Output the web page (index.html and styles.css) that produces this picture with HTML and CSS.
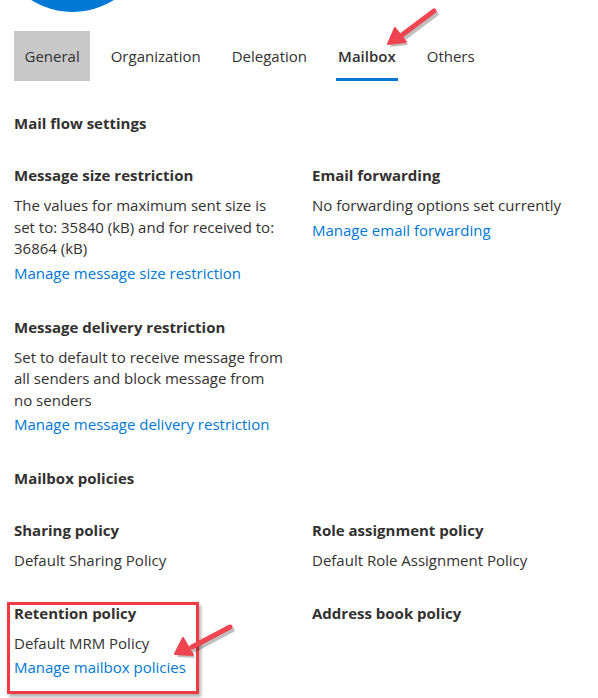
FILE: index.html
```html
<!DOCTYPE html>
<html lang="en">
<head>
<meta charset="utf-8">
<title>Mailbox</title>
<link rel="stylesheet" href="styles.css">
</head>
<body>
<div class="page">
  <div class="avatar"></div>
  <nav class="tabs">
    <span class="tab tab-hover">General</span>
    <span class="tab">Organization</span>
    <span class="tab">Delegation</span>
    <span class="tab tab-active">Mailbox</span>
    <span class="tab">Others</span>
  </nav>

  <main class="content">
    <h2 class="section-title">Mail flow settings</h2>
    <div class="grid">
      <div class="item">
        <h3 class="item-title">Message size restriction</h3>
        <p class="item-text">The values for maximum sent size is set to: 35840 (kB) and for received to: 36864 (kB)</p>
        <a class="item-link" href="#">Manage message size restriction</a>
      </div>
      <div class="item">
        <h3 class="item-title">Email forwarding</h3>
        <p class="item-text">No forwarding options set currently</p>
        <a class="item-link" href="#">Manage email forwarding</a>
      </div>
      <div class="item">
        <h3 class="item-title">Message delivery restriction</h3>
        <p class="item-text">Set to default to receive message from all senders and block message from no senders</p>
        <a class="item-link" href="#">Manage message delivery restriction</a>
      </div>
    </div>

    <h2 class="section-title section-title-next">Mailbox policies</h2>
    <div class="grid grid-policies">
      <div class="item">
        <h3 class="item-title">Sharing policy</h3>
        <p class="item-text">Default Sharing Policy</p>
      </div>
      <div class="item">
        <h3 class="item-title">Role assignment policy</h3>
        <p class="item-text">Default Role Assignment Policy</p>
      </div>
      <div class="item item-marked">
        <h3 class="item-title">Retention policy</h3>
        <p class="item-text">Default MRM Policy</p>
        <a class="item-link" href="#">Manage mailbox policies</a>
      </div>
      <div class="item">
        <h3 class="item-title">Address book policy</h3>
      </div>
    </div>
  </main>

  <svg class="arrow arrow-tab" width="70" height="60" viewBox="0 0 70 60">
    <g class="arrow-shadow" transform="translate(2,3)">
      <line x1="54" y1="12" x2="22" y2="36" />
      <polygon points="8,45 15,29 26,43" />
    </g>
    <g class="arrow-red">
      <line x1="54" y1="12" x2="22" y2="36" />
      <polygon points="8,45 15,29 26,43" />
    </g>
  </svg>

  <svg class="arrow arrow-policy" width="80" height="50" viewBox="0 0 80 50">
    <g class="arrow-shadow" transform="translate(2,3)">
      <line x1="68" y1="9" x2="30" y2="29" />
      <polygon points="13,36 21,20 31,37" />
    </g>
    <g class="arrow-red">
      <line x1="68" y1="9" x2="30" y2="29" />
      <polygon points="13,36 21,20 31,37" />
    </g>
  </svg>
</div>
</body>
</html>
```

FILE: styles.css
```css
* { box-sizing: border-box; }

html, body {
  margin: 0;
  padding: 0;
  background: #ffffff;
}

body {
  font-family: "Segoe UI", "Open Sans", "Noto Sans", sans-serif;
  font-size: 15px;
  color: #323130;
  width: 598px;
  height: 698px;
  overflow: hidden;
}

.page {
  position: relative;
  width: 598px;
  height: 698px;
}

.avatar {
  position: absolute;
  left: -5px;
  top: -143px;
  width: 155px;
  height: 155px;
  border-radius: 50%;
  background: #0078d4;
}

.tabs {
  display: flex;
  gap: 10px;
  padding: 31px 0 0 14px;
  height: 81px;
}

.tab {
  position: relative;
  display: flex;
  align-items: center;
  height: 50px;
  padding: 0 10.5px;
  color: #323130;
  font-size: 15px;
  white-space: nowrap;
}

.tab-hover {
  background: #c8c8c8;
}

.tab-active {
  font-weight: 600;
}

.tab-active::after {
  content: "";
  position: absolute;
  left: 8px;
  right: 8px;
  bottom: 0;
  height: 3px;
  background: #0078d4;
}

.content {
  display: flex;
  flex-direction: column;
  gap: 32px;
  padding: 32px 14px 0 14px;
}

.section-title,
.item-title {
  margin: 0;
  font-size: 15px;
  font-weight: 700;
  line-height: 20px;
  color: #323130;
}

.section-title-next {
  margin-top: 1px;
}

.grid {
  display: grid;
  grid-template-columns: 270px 1fr;
  column-gap: 28px;
  row-gap: 33px;
}

.grid-policies {
  row-gap: 31px;
}

.item {
  display: flex;
  flex-direction: column;
}

.item-title {
  margin-bottom: 10px;
}

.item-text {
  margin: 0;
  line-height: 21.5px;
  color: #323130;
}

.item-link {
  margin-top: 3px;
  line-height: 21px;
  color: #0078d4;
  text-decoration: none;
  align-self: flex-start;
}

.item-marked {
  position: relative;
}

.item-marked::before {
  content: "";
  position: absolute;
  left: -7px;
  top: -1px;
  width: 186px;
  height: 86px;
  border: 3px solid #f03a44;
  box-shadow: 2px 3px 3px rgba(0, 0, 0, 0.3);
  pointer-events: none;
}

.arrow {
  position: absolute;
  overflow: visible;
}

.arrow-tab {
  left: 380px;
  top: -1px;
}

.arrow-policy {
  left: 162px;
  top: 618px;
}

.arrow-shadow line {
  stroke: rgba(0, 0, 0, 0.25);
  stroke-width: 5;
  stroke-linecap: round;
}

.arrow-shadow polygon {
  fill: rgba(0, 0, 0, 0.25);
}

.arrow-red line {
  stroke: #ef4550;
  stroke-width: 5;
  stroke-linecap: round;
}

.arrow-red polygon {
  fill: #ef4550;
  stroke: #ef4550;
  stroke-width: 2;
  stroke-linejoin: round;
}
```
